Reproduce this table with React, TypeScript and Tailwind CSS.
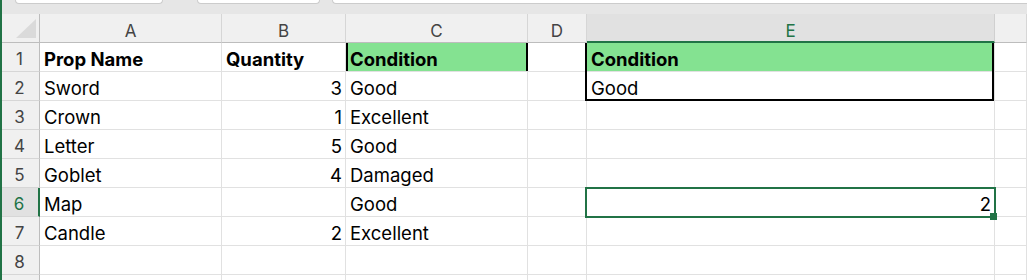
import React from "react";

type Cell = { t?: string; right?: boolean; bold?: boolean };

const rows: Cell[][] = [
  [{ t: "Prop Name", bold: true }, { t: "Quantity", bold: true }, { t: "Condition", bold: true }, {}, { t: "Condition", bold: true }, {}],
  [{ t: "Sword" }, { t: "3", right: true }, { t: "Good" }, {}, { t: "Good" }, {}],
  [{ t: "Crown" }, { t: "1", right: true }, { t: "Excellent" }, {}, {}, {}],
  [{ t: "Letter" }, { t: "5", right: true }, { t: "Good" }, {}, {}, {}],
  [{ t: "Goblet" }, { t: "4", right: true }, { t: "Damaged" }, {}, {}, {}],
  [{ t: "Map" }, {}, { t: "Good" }, {}, { t: "2", right: true }, {}],
  [{ t: "Candle" }, { t: "2", right: true }, { t: "Excellent" }, {}, {}, {}],
  [{}, {}, {}, {}, {}, {}],
  [{}, {}, {}, {}, {}, {}],
];

const cols = ["A", "B", "C", "D", "E", ""];

export default function App() {
  return (
    <div className="relative w-[1027px] h-[280px] overflow-hidden bg-white font-['Inter',_'Liberation_Sans',_sans-serif] text-[18.5px] leading-[22px] text-black">
      {/* top band with tabs */}
      <div className="flex h-[14px] bg-[#e6e6e6] items-start">
        <div className="ml-[15px] w-[148px] h-[4px] bg-white border border-t-0 border-[#cccccc] rounded-b-[4px]" />
        <div className="ml-[34px] w-[123px] h-[4px] bg-white border border-t-0 border-[#cccccc] rounded-b-[4px]" />
        <div className="ml-[12px] flex-1 h-[4px] bg-white border border-t-0 border-r-0 border-[#cccccc] rounded-bl-[4px]" />
      </div>

      <div className="grid grid-cols-[40px_182px_124px_182px_59px_408px_32px] auto-rows-[29px]">
        {/* corner */}
        <div className="relative bg-[#f0f0f0] border-r border-b border-[#bdbdbd]">
          <svg className="absolute left-[16px] top-[5px]" width="21" height="20" viewBox="0 0 21 20">
            <polygon points="20,0 20,19 0,19" fill="#dadada" />
          </svg>
        </div>
        {cols.map((c, i) =>
          i === 4 ? (
            <div
              key={c}
              className="flex items-end justify-center pb-0 bg-[#e1e1e1] border-r border-r-[#d0d0d0] border-b-2 border-b-[#217346] text-[17px] leading-[20px] text-[#217346]"
            >
              {c}
            </div>
          ) : (
            <div
              key={c + i}
              className="flex items-end justify-center pb-[1px] bg-[#f0f0f0] border-r border-r-[#d6d6d6] border-b border-b-[#bdbdbd] text-[17px] leading-[20px] text-[#444444]"
            >
              {c}
            </div>
          )
        )}

        {rows.map((r, ri) => (
          <React.Fragment key={ri}>
            {ri === 5 ? (
              <div className="flex items-end justify-center pb-[2px] bg-[#e1e1e1] border-r-2 border-r-[#217346] border-b border-b-[#d6d6d6] text-[17px] leading-[20px] text-[#217346]">
                {ri + 1}
              </div>
            ) : (
              <div className="flex items-end justify-center pb-[2px] bg-[#f0f0f0] border-r border-r-[#bdbdbd] border-b border-b-[#d6d6d6] text-[17px] leading-[20px] text-[#444444]">
                {ri < 8 ? ri + 1 : ""}
              </div>
            )}
            {r.map((c, ci) => {
              const green = ri === 0 && (ci === 2 || ci === 4);
              return (
                <div
                  key={ci}
                  className={
                    "relative flex items-end pb-[1px] whitespace-nowrap pl-[4px] pr-[3px] border-r border-b border-[#e1e1e1] " +
                    (green ? "bg-[#84e291] " : "") +
                    (c.right ? "justify-end " : "justify-start ") +
                    (c.bold ? "font-bold" : "font-normal")
                  }
                >
                  {c.t}
                  {ri === 0 && ci === 2 && (
                    <>
                      <div className="absolute left-0 top-0 bottom-0 w-[2px] bg-black" />
                      <div className="absolute right-[-1px] top-0 bottom-0 w-[2px] bg-black" />
                    </>
                  )}
                  {ri === 0 && ci === 4 && (
                    <div className="absolute z-10 left-[-2px] right-0 top-0 h-[58px] border-2 border-t-0 border-black" />
                  )}
                  {ri === 5 && ci === 4 && (
                    <>
                      <div className="absolute z-10 left-[-2px] right-[-2px] top-[-1px] bottom-[-2px] border-2 border-[#217346]" />
                      <div className="absolute z-20 right-[-3px] bottom-[-4px] w-[7px] h-[7px] bg-[#217346]" />
                    </>
                  )}
                </div>
              );
            })}
          </React.Fragment>
        ))}
      </div>

      <div className="absolute left-0 top-0 bottom-0 w-[2px] bg-[#217346]" />
    </div>
  );
}
